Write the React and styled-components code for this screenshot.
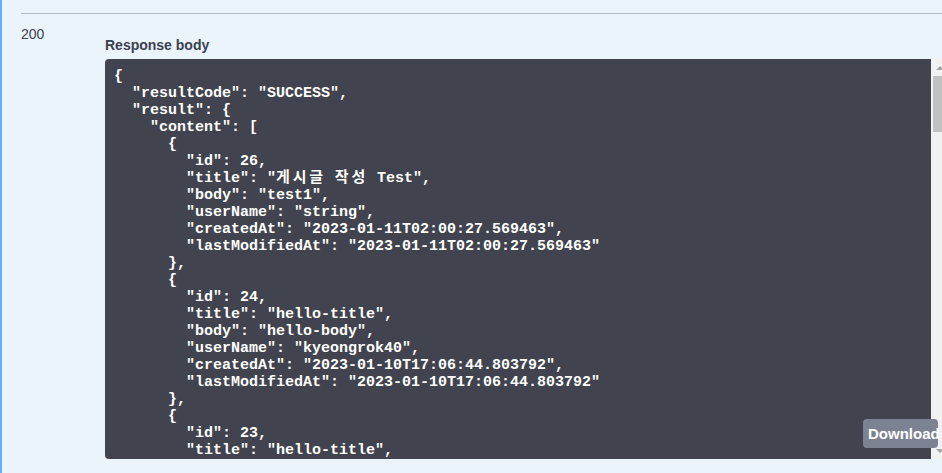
import React from "react";
import styled, { createGlobalStyle } from "styled-components";

const GlobalStyle = createGlobalStyle`
  html, body {
    margin: 0;
    padding: 0;
    overflow: hidden;
    background: #ebf3fb;
  }
  * { box-sizing: border-box; }
`;

const Opblock = styled.div`
  height: 100vh;
  border-left: 2px solid #61affe;
  background: #ebf3fb;
  padding-left: 19px;
  overflow: hidden;
  font-family: "Liberation Sans", Arial, sans-serif;
  color: #3b4151;
`;

const Divider = styled.div`
  height: 1px;
  margin-top: 13px;
  background: #b4bac3;
`;

const ResponseRow = styled.div`
  display: flex;
  padding-top: 12px;
`;

const StatusCol = styled.div`
  flex: 0 0 84px;
  font-size: 14px;
  line-height: 16px;
`;

const DetailCol = styled.div`
  padding-top: 11px;
`;

const Label = styled.h5`
  margin: 0 0 6px;
  font-size: 14px;
  line-height: 16px;
  font-weight: 700;
`;

const CodeFrame = styled.div`
  position: relative;
  display: flex;
  width: 843px;
  height: 400px;
`;

const Pre = styled.pre`
  flex: 1;
  margin: 0;
  padding: 9px 9px;
  background: #41444e;
  border-radius: 4px 0 0 4px;
  color: #ffffff;
  font-family: "Liberation Mono", "Courier New", monospace;
  font-weight: 700;
  font-size: 15px;
  line-height: 17px;
  white-space: pre;
  overflow: hidden;
`;

const Line = styled.span`
  display: block;
  height: 17px;
`;

const Hangul = styled.span`
  font-family: "Noto Sans CJK KR", sans-serif;
  font-weight: 700;
  font-size: 15px;
  line-height: 0;
  letter-spacing: 2.8px;
`;

const ScrollTrack = styled.div`
  flex: 0 0 17px;
  display: flex;
  flex-direction: column;
  background: #f1f1f1;
`;

const ScrollArrow = styled.div`
  flex: 0 0 17px;
  display: flex;
  align-items: center;
  justify-content: center;
  &::before {
    content: "";
    width: 0;
    height: 0;
    border-left: 4px solid transparent;
    border-right: 4px solid transparent;
    ${(p) =>
      p.$down
        ? "border-top: 4px solid #a3a3a3;"
        : "border-bottom: 4px solid #a3a3a3;"}
  }
`;

const ScrollThumb = styled.div`
  flex: 0 0 56px;
  margin: 0 2px;
  background: #c1c1c1;
`;

const ScrollSpacer = styled.div`
  flex: 1;
`;

const DownloadButton = styled.button`
  position: absolute;
  left: 758px;
  top: 360px;
  width: 75px;
  height: 29px;
  padding: 0 5px;
  border: none;
  border-radius: 4px;
  background: #7d8293;
  color: #ffffff;
  font-family: "Liberation Sans", Arial, sans-serif;
  font-weight: 700;
  font-size: 15px;
  text-align: left;
  white-space: nowrap;
  overflow: visible;
  cursor: pointer;
`;

const codeLines = [
  "{",
  '  "resultCode": "SUCCESS",',
  '  "result": {',
  '    "content": [',
  "      {",
  '        "id": 26,',
  '        "title": "게시글 작성 Test",',
  '        "body": "test1",',
  '        "userName": "string",',
  '        "createdAt": "2023-01-11T02:00:27.569463",',
  '        "lastModifiedAt": "2023-01-11T02:00:27.569463"',
  "      },",
  "      {",
  '        "id": 24,',
  '        "title": "hello-title",',
  '        "body": "hello-body",',
  '        "userName": "kyeongrok40",',
  '        "createdAt": "2023-01-10T17:06:44.803792",',
  '        "lastModifiedAt": "2023-01-10T17:06:44.803792"',
  "      },",
  "      {",
  '        "id": 23,',
  '        "title": "hello-title",',
];

function CodeLine({ text }) {
  const parts = text.split(/([\uAC00-\uD7A3]+)/);
  return (
    <Line>
      {parts.map((part, i) =>
        /[\uAC00-\uD7A3]/.test(part) ? (
          <Hangul key={i}>{part}</Hangul>
        ) : (
          <React.Fragment key={i}>{part}</React.Fragment>
        )
      )}
    </Line>
  );
}

export default function App() {
  return (
    <>
      <GlobalStyle />
      <Opblock>
        <Divider />
        <ResponseRow>
          <StatusCol>200</StatusCol>
          <DetailCol>
            <Label>Response body</Label>
            <CodeFrame>
              <Pre>
                {codeLines.map((l, i) => (
                  <CodeLine key={i} text={l} />
                ))}
              </Pre>
              <ScrollTrack>
                <ScrollArrow />
                <ScrollThumb />
                <ScrollSpacer />
                <ScrollArrow $down />
              </ScrollTrack>
              <DownloadButton>Download</DownloadButton>
            </CodeFrame>
          </DetailCol>
        </ResponseRow>
      </Opblock>
    </>
  );
}
